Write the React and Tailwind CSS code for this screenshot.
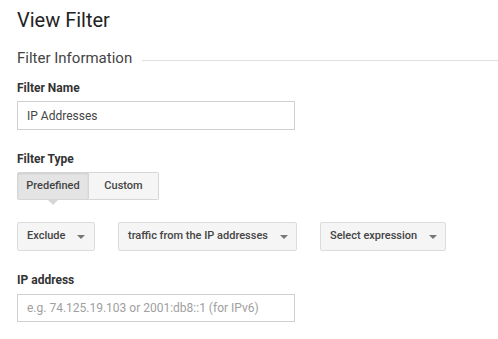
import { useState } from "react";

function Caret() {
  return (
    <svg width="8" height="4" viewBox="0 0 8 4" className="ml-auto shrink-0">
      <path d="M0 0h8L4 4z" fill="#777" />
    </svg>
  );
}

function SelectButton({ label, width }) {
  return (
    <button
      className={`flex h-[29px] items-center gap-3 whitespace-nowrap rounded-[2px] border border-[#dcdcdc] bg-[#f5f5f5] pl-[9px] pr-[11px] text-[11px] font-medium text-[#444] ${width}`}
    >
      <span>{label}</span>
      <Caret />
    </button>
  );
}

export default function App() {
  const [type, setType] = useState("predefined");

  return (
    <div className="h-[339px] w-[498px] overflow-hidden bg-white pl-[17px] font-['Roboto',sans-serif] text-[#333]">
      <h1 className="pt-[8px] text-[20px] leading-[24px] text-[#222]">View Filter</h1>

      {/* section header */}
      <div className="mt-[17px] flex items-center">
        <span className="text-[15px] leading-[18px] text-[#444]">Filter Information</span>
        <div className="ml-[10px] mt-[4px] h-px flex-1 bg-[#e0e0e0]" />
      </div>

      <label className="mt-[14px] block text-[12px] font-bold leading-[14px] text-[#333]">Filter Name</label>
      <input
        defaultValue="IP Addresses"
        className="mt-[6px] block h-[29px] w-[278px] rounded-none border border-[#d0d0d0] px-[9px] text-[12px] text-[#444] outline-none"
      />

      <label className="mt-[22px] block text-[12px] font-bold leading-[14px] text-[#333]">Filter Type</label>
      <div className="relative mt-[6px] flex w-[142px]">
        <button
          onClick={() => setType("predefined")}
          className={`relative h-[28px] w-[72px] rounded-l-[2px] border border-[#d6d6d6] text-[11px] font-medium text-[#444] ${
            type === "predefined" ? "bg-[#e4e4e4] shadow-[inset_0_1px_2px_rgba(0,0,0,0.1)]" : "bg-[#f5f5f5]"
          }`}
        >
          Predefined
          {type === "predefined" && (
            <span className="absolute left-1/2 top-full -ml-[6px] h-0 w-0 border-x-[6px] border-t-[6px] border-x-transparent border-t-[#d6d6d6]" />
          )}
        </button>
        <button
          onClick={() => setType("custom")}
          className={`h-[28px] flex-1 rounded-r-[2px] border border-l-0 border-[#d6d6d6] text-[11px] font-medium text-[#444] ${
            type === "custom" ? "bg-[#e4e4e4]" : "bg-[#f5f5f5]"
          }`}
        >
          Custom
        </button>
      </div>

      <div className="mt-[22px] flex gap-[23px]">
        <SelectButton label="Exclude" width="w-[78px]" />
        <SelectButton label="traffic from the IP addresses" width="w-[179px]" />
        <SelectButton label="Select expression" width="w-[126px]" />
      </div>

      <label className="mt-[22px] block text-[12px] font-bold leading-[14px] text-[#333]">IP address</label>
      <input
        placeholder="e.g. 74.125.19.103 or 2001:db8::1 (for IPv6)"
        className="mt-[7px] block h-[28px] w-[278px] rounded-none border border-[#d0d0d0] px-[9px] text-[12px] text-[#444] outline-none placeholder:text-[#a0a0a0]"
      />
    </div>
  );
}
